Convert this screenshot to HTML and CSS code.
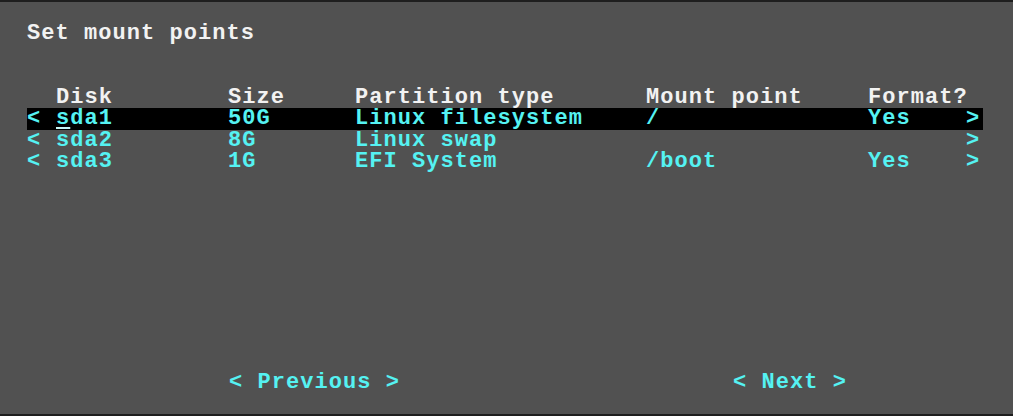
FILE: index.html
```html
<!DOCTYPE html>
<html lang="en">
<head>
<meta charset="utf-8">
<title>Set mount points</title>
<link rel="stylesheet" href="styles.css">
</head>
<body>
<div class="screen">
  <div class="title">Set mount points</div>
  <div class="table">
    <div class="row head">
      <span></span><span>Disk</span><span>Size</span><span>Partition type</span><span>Mount point</span><span>Format?</span><span></span>
    </div>
    <div class="row item selected">
      <span>&lt;</span><span><span class="cursor">s</span>da1</span><span>50G</span><span>Linux filesystem</span><span>/</span><span>Yes</span><span>&gt;</span>
    </div>
    <div class="row item">
      <span>&lt;</span><span>sda2</span><span>8G</span><span>Linux swap</span><span></span><span></span><span>&gt;</span>
    </div>
    <div class="row item">
      <span>&lt;</span><span>sda3</span><span>1G</span><span>EFI System</span><span>/boot</span><span>Yes</span><span>&gt;</span>
    </div>
  </div>
  <div class="buttons">
    <span class="btn">&lt; Previous &gt;</span>
    <span class="btn">&lt; Next &gt;</span>
  </div>
</div>
</body>
</html>
```
FILE: styles.css
```css
html, body {
  margin: 0;
  padding: 0;
  background: #515151;
}
.screen {
  box-sizing: border-box;
  width: 1013px;
  height: 416px;
  border-top: 2px solid #1e1e1e;
  border-bottom: 2px solid #1e1e1e;
  padding: 21px 0 0 27px;
  font-family: "Liberation Mono", "DejaVu Sans Mono", monospace;
  font-weight: bold;
  font-size: 22px;
  letter-spacing: 1.05px;
  line-height: 21.5px;
  color: #f2f2f2;
  display: flex;
  flex-direction: column;
}
.title {
  white-space: pre;
}
.table {
  margin-top: 42px;
  width: 956px;
}
.row {
  display: grid;
  grid-template-columns: 29px 172px 127px 291px 222px 98px 17px;
  white-space: pre;
}
.item {
  color: #55f2f2;
}
.selected {
  background: #000;
}
.cursor {
  text-decoration: underline;
  text-decoration-thickness: 2px;
  text-underline-offset: 3px;
  text-decoration-color: #c8f6f6;
}
.buttons {
  margin-top: 199px;
  padding-left: 202px;
  display: grid;
  grid-template-columns: 504px auto;
  color: #55f2f2;
  white-space: pre;
}
```
